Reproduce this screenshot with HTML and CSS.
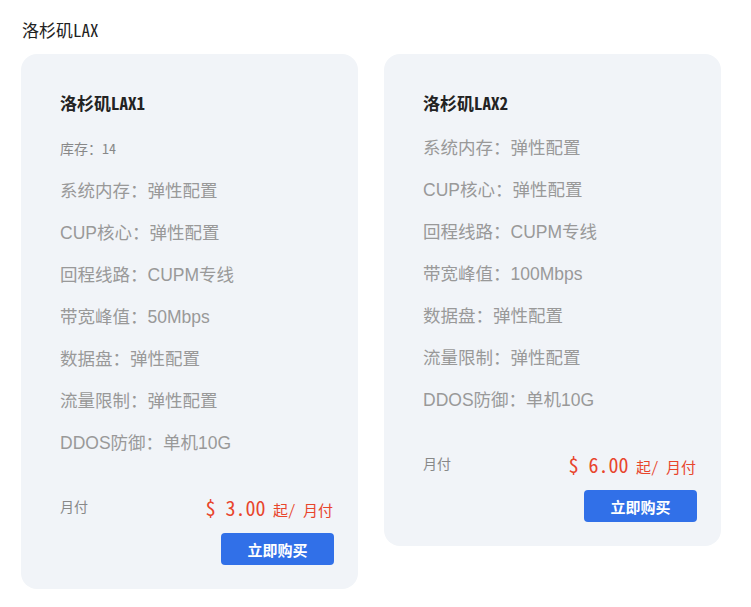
FILE: index.html
```html
<!DOCTYPE html>
<html lang="zh-CN">
<head>
<meta charset="utf-8">
<title>洛杉矶LAX</title>
<link rel="stylesheet" href="styles.css">
</head>
<body>
<div class="page">
  <h2 class="region">洛杉矶LAX</h2>
  <div class="cards">
    <div class="card">
      <h3 class="card-title">洛杉矶LAX1</h3>
      <div class="stock">库存：14</div>
      <ul class="specs">
        <li>系统内存：弹性配置</li>
        <li>CUP核心：弹性配置</li>
        <li>回程线路：CUPM专线</li>
        <li>带宽峰值：50Mbps</li>
        <li>数据盘：弹性配置</li>
        <li>流量限制：弹性配置</li>
        <li>DDOS防御：单机10G</li>
      </ul>
      <div class="price-row">
        <span class="cycle">月付</span>
        <span class="price"><span class="amount">$ 3.00</span> <span class="unit">起/ 月付</span></span>
      </div>
      <div class="actions"><button class="buy">立即购买</button></div>
    </div>
    <div class="card">
      <h3 class="card-title">洛杉矶LAX2</h3>
      <ul class="specs">
        <li>系统内存：弹性配置</li>
        <li>CUP核心：弹性配置</li>
        <li>回程线路：CUPM专线</li>
        <li>带宽峰值：100Mbps</li>
        <li>数据盘：弹性配置</li>
        <li>流量限制：弹性配置</li>
        <li>DDOS防御：单机10G</li>
      </ul>
      <div class="price-row">
        <span class="cycle">月付</span>
        <span class="price"><span class="amount">$ 6.00</span> <span class="unit">起/ 月付</span></span>
      </div>
      <div class="actions"><button class="buy">立即购买</button></div>
    </div>
  </div>
</div>
</body>
</html>
```
FILE: styles.css
```css
* { box-sizing: border-box; }
body {
  margin: 0;
  background: #fff;
  font-family: "Noto Sans Mono CJK SC", "Noto Sans CJK SC", monospace;
  font-feature-settings: "hwid" 1;
  color: #333;
}
.page {
  padding: 18px 0 0 21px;
}
.region {
  margin: 0 0 12px 1px;
  font-size: 17px;
  line-height: 24px;
  font-weight: normal;
  color: #222;
}
.cards {
  display: flex;
  align-items: flex-start;
  gap: 26px;
}
.card {
  width: 337px;
  background: #f1f4f8;
  border-radius: 16px;
  padding: 37px 24px 24px 39px;
}
.card-title {
  margin: 0 0 12px;
  font-size: 17px;
  line-height: 24px;
  font-weight: bold;
  color: #222;
}
.stock {
  font-size: 14px;
  line-height: 42px;
  margin-bottom: 1px;
  color: #888;
}
.specs {
  list-style: none;
  margin: 0;
  padding: 0;
}
.specs li {
  font-family: "Liberation Sans", "Noto Sans CJK SC", sans-serif;
  font-feature-settings: normal;
  font-size: 17.5px;
  line-height: 42px;
  color: #999;
}
.price-row {
  margin-top: 28px;
  display: flex;
  justify-content: space-between;
  align-items: center;
  height: 30px;
}
.cycle {
  font-size: 14px;
  color: #888;
  margin-top: -3px;
}
.price {
  color: #e8452c;
  padding-right: 1px;
  font-size: 15px;
}
.amount {
  font-size: 20px;
}
.unit {
  font-size: 15px;
}
.actions {
  display: flex;
  justify-content: flex-end;
  margin-top: 11px;
}
.buy {
  width: 113px;
  height: 32px;
  border: none;
  border-radius: 4px;
  background: #3170e8;
  color: #fff;
  font-family: "Noto Sans CJK SC", sans-serif;
  font-size: 15px;
  font-weight: bold;
  cursor: pointer;
}
```
